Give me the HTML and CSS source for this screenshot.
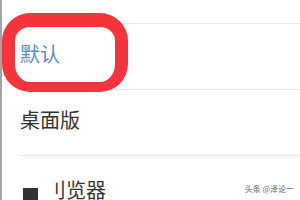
FILE: index.html
```html
<!DOCTYPE html>
<html lang="zh">
<head>
<meta charset="utf-8">
<link rel="stylesheet" href="styles.css">
</head>
<body>
<div class="screen">
  <div class="list">
    <div class="row row-top"></div>
    <div class="row"><span class="label label-active">默认</span></div>
    <div class="row"><span class="label">桌面版</span></div>
    <div class="row row-last"><span class="square"></span><span class="label label-cut">刂览器</span></div>
  </div>
  <div class="highlight"></div>
  <div class="watermark">头条 @泽论一</div>
</div>
</body>
</html>
```
FILE: styles.css
```css
html, body {
  margin: 0;
  padding: 0;
  background: #ffffff;
}
.screen {
  position: relative;
  width: 300px;
  height: 200px;
  overflow: hidden;
  background: #ffffff;
  border-left: 2px solid #a3a3a3;
  box-sizing: border-box;
  font-family: "Noto Sans CJK SC", "Noto Sans", sans-serif;
}
.list {
  display: flex;
  flex-direction: column;
}
.row {
  display: flex;
  align-items: center;
  margin-left: 18px;
  height: 65px;
  border-bottom: 1px solid #e6e6e6;
  box-sizing: content-box;
}
.row-top {
  height: 23px;
}
.label {
  font-size: 20px;
  line-height: 24px;
  color: #333333;
  padding-bottom: 5px;
}
.label-active {
  color: #5b8ec2;
}
.row-last {
  align-items: flex-start;
  padding-top: 22px;
  height: 43px;
}
.square {
  width: 15px;
  height: 14px;
  background: #333333;
  margin-left: 3px;
  margin-top: 10px;
}
.label-cut {
  margin-left: 8px;
}
.highlight {
  position: absolute;
  left: 0;
  top: 13px;
  width: 100px;
  height: 55px;
  border-style: solid;
  border-color: #f5343b;
  border-width: 14px 13px 10px 13px;
  border-radius: 28px;
}
.watermark {
  position: absolute;
  right: 6px;
  top: 183px;
  font-size: 8px;
  line-height: 11px;
  color: #666666;
  text-shadow: 0 0 2px #ffffff, 0 0 1px #ffffff;
}
```
